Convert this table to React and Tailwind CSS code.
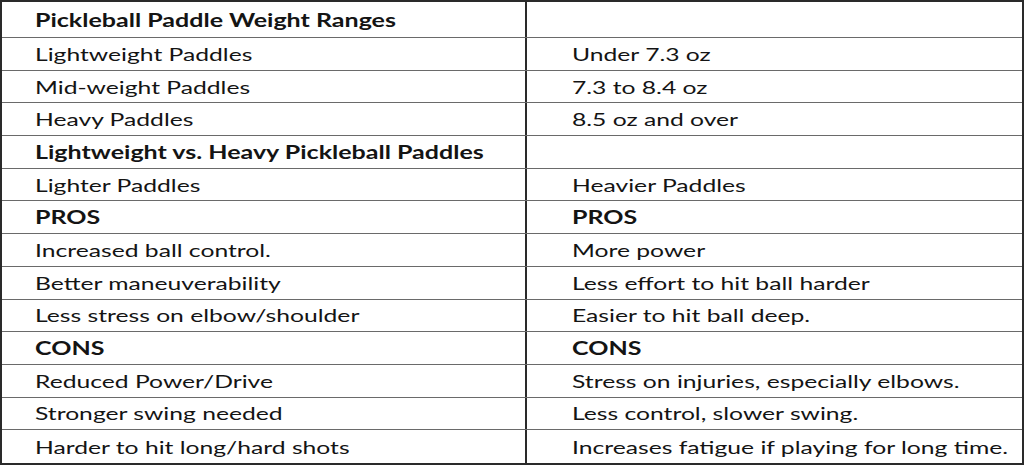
import React from "react";

const rows = [
  { l: "Pickleball Paddle Weight Ranges", r: "", bl: true },
  { l: "Lightweight Paddles", r: "Under 7.3 oz" },
  { l: "Mid-weight Paddles", r: "7.3 to 8.4 oz" },
  { l: "Heavy Paddles", r: "8.5 oz and over" },
  { l: "Lightweight vs. Heavy Pickleball Paddles", r: "", bl: true },
  { l: "Lighter Paddles", r: "Heavier Paddles" },
  { l: "PROS", r: "PROS", bl: true, br: true },
  { l: "Increased ball control.", r: "More power" },
  { l: "Better maneuverability", r: "Less effort to hit ball harder" },
  { l: "Less stress on elbow/shoulder", r: "Easier to hit ball deep." },
  { l: "CONS", r: "CONS", bl: true, br: true },
  { l: "Reduced Power/Drive", r: "Stress on injuries, especially elbows." },
  { l: "Stronger swing needed", r: "Less control, slower swing." },
  { l: "Harder to hit long/hard shots", r: "Increases fatigue if playing for long time." },
];

function Txt({ children, bold }) {
  return (
    <span
      className={
        "inline-block origin-left whitespace-nowrap text-[18px] leading-none text-[#141414] " +
        (bold ? "font-bold scale-x-[1.39]" : "font-normal scale-x-[1.37]")
      }
    >
      {children}
    </span>
  );
}

export default function App() {
  return (
    <div
      className="w-[1024px] h-[465px] bg-white overflow-hidden"
      style={{ fontFamily: "Lato, 'Open Sans', sans-serif" }}
    >
      <div className="w-[1024px] h-[465px] border-2 border-[#2a2a2a] flex flex-col">
        {rows.map((row, i) => {
          const h =
            i === 0
              ? "h-[36px] border-b border-[#6a6a6a]"
              : i < rows.length - 1
              ? "h-[32.7px] border-b border-[#6a6a6a]"
              : "flex-1";
          return (
            <div key={i} className={"flex shrink-0 " + h}>
              <div className="w-[525px] border-r-2 border-[#2a2a2a] flex items-center pl-[33px]">
                <Txt bold={row.bl}>{row.l}</Txt>
              </div>
              <div className="flex-1 flex items-center pl-[45px]">
                <Txt bold={row.br}>{row.r}</Txt>
              </div>
            </div>
          );
        })}
      </div>
    </div>
  );
}
